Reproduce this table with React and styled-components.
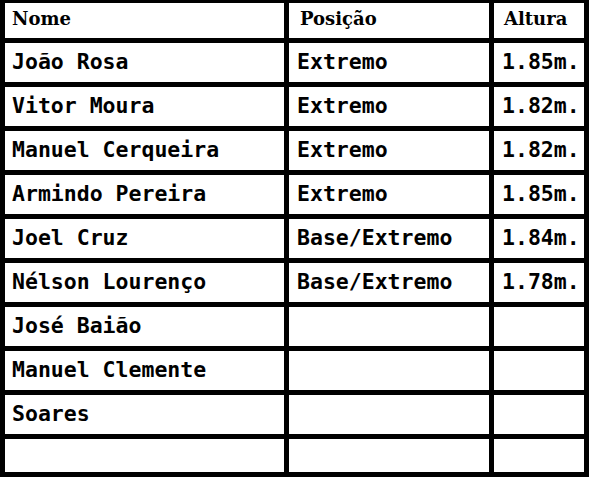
import React from "react";
import styled, { createGlobalStyle } from "styled-components";

const Global = createGlobalStyle`
  html, body {
    margin: 0;
    padding: 0;
    background: #ffffff;
  }
`;

const Sheet = styled.div`
  display: grid;
  grid-template-columns: 279px 200px 90px;
  grid-template-rows: 35px repeat(9, 39px) 33px;
  gap: 5px;
  padding: 3px 5px 5px 5px;
  width: 589px;
  box-sizing: border-box;
  background: #000000;
`;

const HeadCell = styled.div`
  display: flex;
  align-items: center;
  padding: 0 0 4px ${(p) => p.$pad || 7}px;
  background: #ffffff;
  color: #000000;
  font-family: "DejaVu Serif", "Liberation Serif", serif;
  font-weight: bold;
  font-size: 18px;
  white-space: nowrap;
`;

const Cell = styled.div`
  display: flex;
  align-items: center;
  padding: 0 0 3px ${(p) => p.$pad || 7}px;
  background: #ffffff;
  color: #000000;
  font-family: "DejaVu Sans Mono", "Liberation Mono", monospace;
  font-weight: bold;
  font-size: 21.5px;
  white-space: nowrap;
  overflow: hidden;
`;

const jogadores = [
  ["João Rosa", "Extremo", "1.85m."],
  ["Vitor Moura", "Extremo", "1.82m."],
  ["Manuel Cerqueira", "Extremo", "1.82m."],
  ["Armindo Pereira", "Extremo", "1.85m."],
  ["Joel Cruz", "Base/Extremo", "1.84m."],
  ["Nélson Lourenço", "Base/Extremo", "1.78m."],
  ["José Baião", "", ""],
  ["Manuel Clemente", "", ""],
  ["Soares", "", ""],
  ["", "", ""],
];

const App = () => {
  return (
    <>
      <Global />
      <Sheet>
        <HeadCell>Nome</HeadCell>
        <HeadCell $pad={11}>Posição</HeadCell>
        <HeadCell $pad={10}>Altura</HeadCell>
        {jogadores.map(([nome, pos, alt], i) => (
          <React.Fragment key={i}>
            <Cell>{nome}</Cell>
            <Cell $pad={8}>{pos}</Cell>
            <Cell $pad={8}>{alt}</Cell>
          </React.Fragment>
        ))}
      </Sheet>
    </>
  );
};

export default App;
